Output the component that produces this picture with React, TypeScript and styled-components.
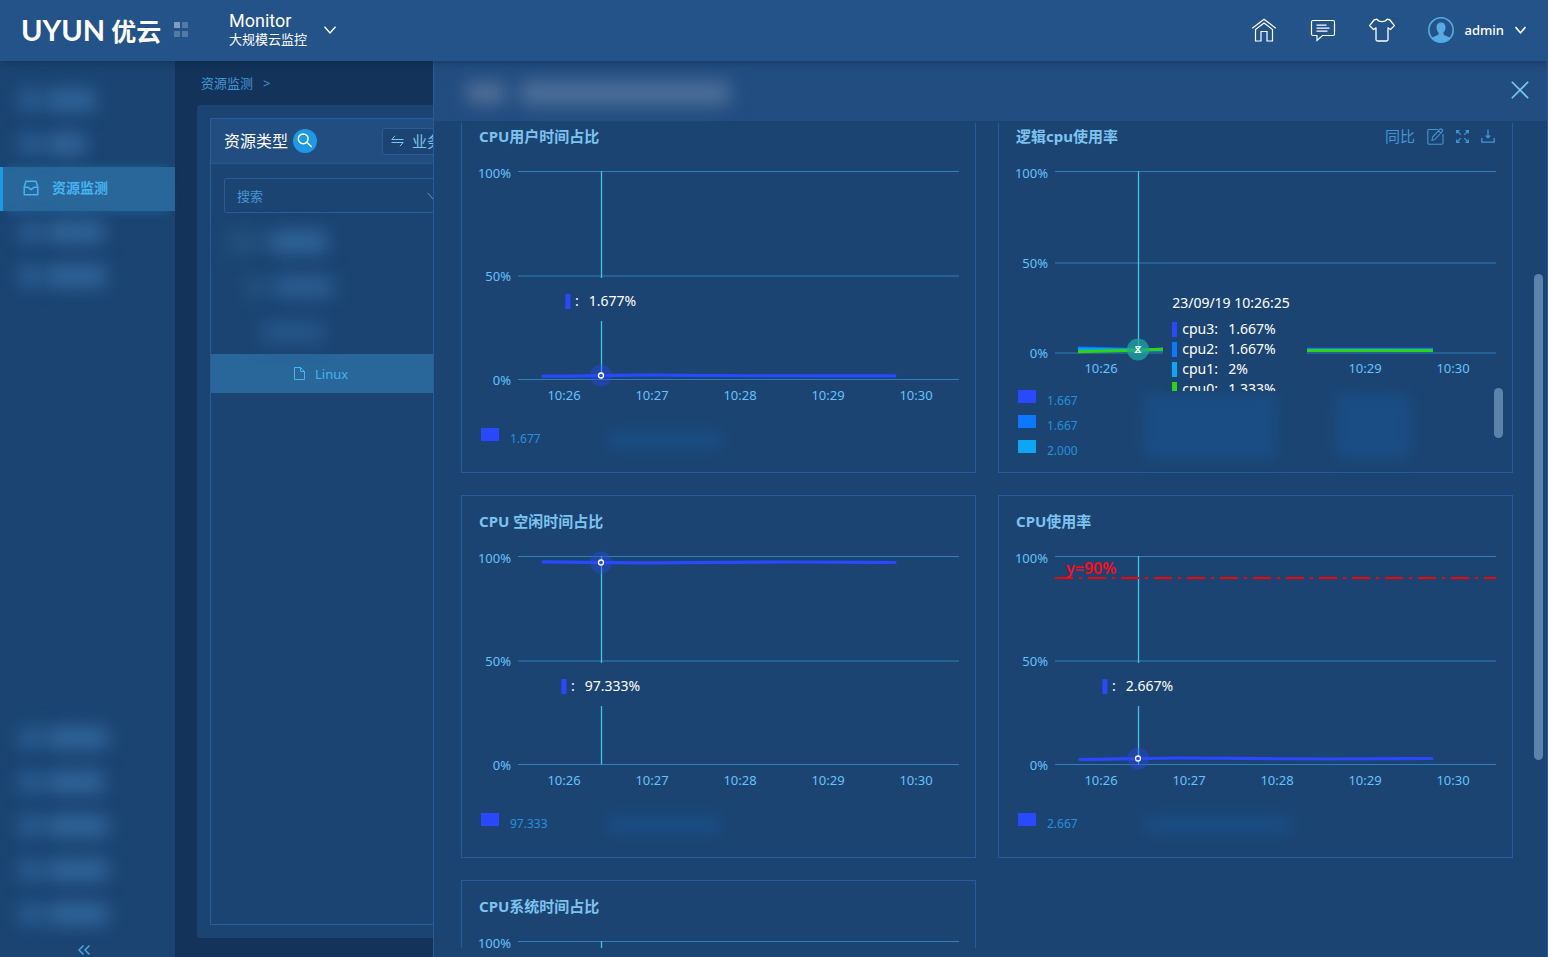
import React from 'react';
import styled, { createGlobalStyle, css } from 'styled-components';

const color = {
  header: '#235388',
  page: '#13335b',
  panel: '#1b4472',
  panelHead: '#224d80',
  border: '#285d9b',
  active: '#296699',
  accent: '#1f98e5',
  activeText: '#45b4f0',
  link: '#4497d2',
  title: '#7ec3ef',
  axis: '#66c2fa',
  grid: '#2f7fb8',
  pointer: '#45c4e0',
  legend: '#2790dc',
  indigo: '#2a48ff',
  blue: '#0c78ff',
  cyan: '#0fa5f5',
  green: '#2fd50c',
  thumb: '#5c83a9',
};

const GlobalStyle = createGlobalStyle`
  * { box-sizing: border-box; }
  body {
    margin: 0;
    background: ${color.page};
    font-family: "Noto Sans", "Noto Sans CJK SC", sans-serif;
    font-size: 13px;
    line-height: 20px;
  }
  button { font: inherit; color: inherit; background: none; border: 0; padding: 0; cursor: pointer; }
  a { text-decoration: none; color: inherit; }
  ul { list-style: none; margin: 0; padding: 0; }
  svg { display: block; flex: none; }
`;

const Page = styled.div`
  display: flex;
  flex-direction: column;
  height: 100vh;
  overflow: hidden;
`;

/* ---------- top bar ---------- */

const TopBar = styled.header`
  display: flex;
  align-items: center;
  flex: none;
  height: 61px;
  padding: 0 22px 2px 21px;
  background: ${color.header};
  color: #fff;
  position: relative;
  z-index: 3;
  box-shadow: 0 1px 8px rgba(8, 28, 56, 0.45);
`;

const Logo = styled.a`
  display: flex;
  align-items: center;
  gap: 6px;
  width: 140px;
  white-space: nowrap;
  font-family: Lato, sans-serif;
  font-size: 29px;
  line-height: 40px;
  font-weight: 700;
`;

const LogoCjk = styled.span`
  font-family: "Noto Sans CJK SC", sans-serif;
  font-size: 25px;
`;

const AppsButton = styled.button`
  margin-left: 13px;
`;

const ProductButton = styled.button`
  display: flex;
  align-items: center;
  gap: 17px;
  margin-left: 41px;
  text-align: left;
`;

const ProductName = styled.span`
  display: flex;
  flex-direction: column;
  line-height: 19px;
`;

const ProductTitle = styled.span`
  font-family: Roboto, sans-serif;
  font-size: 18px;
`;

const TopActions = styled.nav`
  display: flex;
  align-items: center;
  gap: 33px;
  margin-left: auto;
`;

const UserButton = styled.button`
  display: flex;
  align-items: center;
  gap: 11px;
  font-family: "Noto Sans", sans-serif;
  font-weight: 500;
`;

/* ---------- body and side bar ---------- */

const Body = styled.div`
  display: flex;
  flex: 1;
  min-height: 0;
  position: relative;
`;

const SideBar = styled.nav`
  display: flex;
  flex-direction: column;
  flex: none;
  width: 175px;
  padding-top: 18px;
  background: ${color.panel};
`;

const sideRow = css`
  display: flex;
  align-items: center;
  height: 44px;
  padding: 0 0 2px 20px;
`;

const HiddenItem = styled.li`
  ${sideRow}
  gap: 4px;
`;

const ActiveItem = styled.li`
  ${sideRow}
  border-left: 3px solid ${color.accent};
  background: ${color.active};
  color: ${color.activeText};
  font-size: 14px;
  font-weight: 700;
  box-shadow: 0 -8px 8px -8px #1b6294, 0 8px 8px -6px #1b5c90;
`;

const ActiveLink = styled.a`
  display: flex;
  align-items: center;
  gap: 13px;
`;

const BottomList = styled.ul`
  margin-top: auto;
`;

const CollapseButton = styled.button`
  display: flex;
  justify-content: center;
  align-items: center;
  height: 20px;
  padding: 6px 8px 0 0;
`;

const Smudge = styled.span<{ $w: number; $h?: number; $c?: string; $blur?: number }>`
  display: block;
  flex: none;
  width: ${p => p.$w}px;
  height: ${p => p.$h ?? 22}px;
  border-radius: 6px;
  background: ${p => p.$c ?? '#31659a'};
  filter: blur(${p => p.$blur ?? 9}px);
`;

/* ---------- resource tree ---------- */

const Main = styled.main`
  display: flex;
  flex-direction: column;
  flex: 1;
  min-width: 0;
  padding: 0 22px 19px;
`;

const Breadcrumb = styled.nav`
  display: flex;
  align-items: center;
  gap: 10px;
  height: 44px;
  padding-left: 4px;
  color: ${color.link};
`;

const Panel = styled.section`
  display: flex;
  flex: 1;
  padding: 13px;
  border-radius: 3px;
  background: ${color.panel};
`;

const TreeCard = styled.div`
  width: 250px;
  border: 1px solid ${color.border};
`;

const TreeHead = styled.div`
  display: flex;
  align-items: center;
  height: 45px;
  padding: 0 13px;
  border-bottom: 1px solid #25558b;
  background: ${color.panelHead};
`;

const TreeTitle = styled.h2`
  margin: 0;
  color: #fff;
  font-size: 16px;
  font-weight: 400;
`;

const RoundButton = styled.button`
  display: flex;
  align-items: center;
  justify-content: center;
  width: 24px;
  height: 24px;
  margin-left: 5px;
  border-radius: 50%;
  background: ${color.accent};
`;

const SwitchButton = styled.button`
  display: flex;
  align-items: center;
  gap: 8px;
  width: 64px;
  height: 27px;
  margin-left: auto;
  padding-left: 8px;
  border: 1px solid ${color.border};
  border-radius: 2px;
  background: ${color.panel};
  color: ${color.title};
  font-size: 15px;
  white-space: nowrap;
`;

const SearchBox = styled.label`
  display: flex;
  align-items: center;
  height: 35px;
  margin: 14px 13px 6px;
  padding: 0 6px 0 12px;
  border: 1px solid ${color.border};
  border-radius: 2px;
`;

const SearchInput = styled.input`
  flex: 1;
  min-width: 0;
  padding: 0;
  border: 0;
  outline: 0;
  background: none;
  color: ${color.title};
  font: inherit;
  &::placeholder { color: ${color.link}; opacity: 1; }
`;

const TreeHidden = styled.li<{ $indent: number }>`
  display: flex;
  align-items: center;
  gap: 6px;
  height: 45px;
  padding-left: ${p => p.$indent}px;
`;

const TreeLeaf = styled.li`
  height: 39px;
  background: ${color.active};
  color: ${color.activeText};
`;

const LeafLink = styled.a`
  display: flex;
  align-items: center;
  gap: 10px;
  height: 100%;
  padding-left: 83px;
`;

/* ---------- drawer ---------- */

const Drawer = styled.aside`
  display: flex;
  flex-direction: column;
  position: absolute;
  inset: 0 0 0 433px;
  z-index: 2;
  padding-bottom: 9px;
  border: solid ${color.border};
  border-width: 0 1px;
  background: ${color.panel};
`;

const DrawerHead = styled.div`
  display: flex;
  align-items: center;
  flex: none;
  gap: 14px;
  height: 60px;
  margin-bottom: 2px;
  padding: 4px 18px 0 32px;
  background: ${color.panelHead};
`;

const CloseButton = styled.button`
  margin: 0 0 7px auto;
`;

const DrawerBody = styled.div`
  flex: 1;
  min-height: 0;
  overflow: hidden;
`;

const CardGrid = styled.div`
  display: grid;
  grid-template-columns: 1fr 1fr;
  gap: 22px;
  margin-top: -13px;
  padding: 0 34px 0 27px;
`;

const Thumb = styled.span<{ $top: number; $h: number; $right: number }>`
  position: absolute;
  top: ${p => p.$top}px;
  right: ${p => p.$right}px;
  width: 9px;
  height: ${p => p.$h}px;
  border-radius: 5px;
  background: ${color.thumb};
`;

/* ---------- metric card ---------- */

const Card = styled.article`
  min-height: 363px;
  border: 1px solid ${color.border};
`;

const CardHead = styled.div`
  display: flex;
  align-items: center;
  justify-content: space-between;
  height: 40px;
  padding: 10px 17px 0;
`;

const CardTitle = styled.h3`
  margin: 0;
  color: ${color.title};
  font-size: 15px;
  font-weight: 700;
`;

const CardTools = styled.div`
  display: flex;
  align-items: center;
  gap: 12px;
  color: ${color.link};
  font-size: 15px;
`;

const ChartBox = styled.div`
  position: relative;
`;

const ChartSvg = styled.svg`
  width: 100%;
  height: auto;
  text { font-size: 13px; fill: ${color.axis}; }
  .mark { font-size: 16px; font-weight: 600; fill: #ff0a18; }
`;

const Tip = styled.div`
  position: absolute;
  top: 127px;
  left: 27%;
  height: 43px;
  padding: 13px 10px 10px;
  transform: translateX(-50%);
  background: ${color.panel};
  color: #fff;
`;

const WideTip = styled.div`
  position: absolute;
  top: 133px;
  left: 32%;
  width: 144px;
  height: 107px;
  padding: 9px;
  overflow: hidden;
  z-index: 1;
  background: ${color.panel};
  color: #fff;
`;

const TipDate = styled.div`
  margin-bottom: 6px;
  font-size: 14px;
  white-space: nowrap;
`;

const TipRow = styled.div`
  display: flex;
  align-items: center;
  height: 20px;
  font-size: 14px;
  white-space: nowrap;
`;

const TipMark = styled.span<{ $c: string }>`
  width: 5px;
  height: 15px;
  margin-right: 5px;
  background: ${p => p.$c};
`;

const TipValue = styled.span`
  margin-left: 10px;
`;

const TipName = styled.span`
  width: 36px;
`;

const Legend = styled.ul`
  position: relative;
  padding: 7px 0 0 19px;
`;

const LegendRow = styled.li`
  display: flex;
  gap: 11px;
  height: 25px;
  color: ${color.legend};
  font-size: 12px;
  line-height: 22px;
`;

const Swatch = styled.span<{ $c: string }>`
  width: 18px;
  height: 13px;
  background: ${p => p.$c};
`;

const LegendNames = styled.div`
  display: flex;
  position: absolute;
  top: 10px;
  left: 144px;
  gap: 58px;
`;

/* ---------- icons ---------- */

const ChevronDown = ({ w = 12, sw = 1.3, c = '#fff' }) => (
  <svg width={w} height="8" viewBox="0 0 12 8" fill="none" stroke={c} strokeWidth={sw}>
    <path d="M0.5 0.8 6 7 11.5 0.8" />
  </svg>
);

const AppsIcon = () => (
  <svg width="14" height="15" viewBox="0 0 14 15" fill="#5579a5">
    <rect width="6" height="6" rx="0.5" fill="#7f9cc0" />
    <rect x="8" width="6" height="6" rx="0.5" />
    <rect y="9" width="6" height="6" rx="0.5" />
    <rect x="8" y="9" width="6" height="6" rx="0.5" />
  </svg>
);

const HomeIcon = () => (
  <svg width="26" height="26" viewBox="0 0 26 26" fill="none" stroke="#fff" strokeWidth="1.2">
    <path d="M1.3 11.2 13 2.2l11.7 9" />
    <path d="M4.5 12.5 13 6l8.500 6.500V24H16v-9.500h-6V24H4.500z" />
  </svg>
);

const MessageIcon = () => (
  <svg width="26" height="26" viewBox="0 0 26 26" fill="none" stroke="#fff" strokeWidth="1.2">
    <path d="M3 3.500h20a1.500 1.500 0 0 1 1.500 1.500v12a1.500 1.500 0 0 1-1.500 1.500H12.500L7 23.500v-5H3A1.500 1.500 0 0 1 1.500 17V5A1.500 1.500 0 0 1 3 3.500z" />
    <path d="M6.500 8.200h10M6.500 11.200h13M6.500 14.200h11" />
  </svg>
);

const ShirtIcon = () => (
  <svg width="26" height="26" viewBox="0 0 26 26" fill="none" stroke="#fff" strokeWidth="1.3" strokeLinejoin="round">
    <path d="M8 2.200C9.500 5.400 16.500 5.400 18 2.200l3 .8 4.400 5.600-3.900 3.900-2.500-1.600v11.600a1.500 1.500 0 0 1-1.500 1.500h-9A1.500 1.500 0 0 1 7 22.500V10.900l-2.500 1.600L.6 8.600 5 3z" />
  </svg>
);

const AvatarIcon = () => (
  <svg width="26" height="26" viewBox="0 0 26 26">
    <circle cx="13" cy="13" r="12.200" fill="none" stroke="#56abe4" strokeWidth="1.600" />
    <path d="M13 5.500c3 0 4.600 2 4.500 5-.1 2.200-.9 3.900-2 4.800v2.200c1 1.400 4.500 1.500 6.500 3.200A12 12 0 0 1 13 25a12 12 0 0 1-9-4.300c2-1.700 5.500-1.800 6.500-3.200v-2.200c-1.100-.9-1.900-2.600-2-4.800-.1-3 1.500-5 4.500-5z" fill="#56abe4" />
  </svg>
);

const InboxIcon = () => (
  <svg width="16" height="16" viewBox="0 0 16 16" fill="none" stroke="currentColor" strokeWidth="1.500" strokeLinejoin="round">
    <path d="M1.200 7 3 1.200h10L14.800 7v7.800H1.200z" />
    <path d="M1.200 7.300H5l3 2.400 3-2.400h3.800" />
  </svg>
);

const SearchIcon = () => (
  <svg width="16" height="16" viewBox="0 0 16 16" fill="none" stroke="#fff" strokeWidth="1.500">
    <circle cx="6.200" cy="5.800" r="4.900" />
    <path d="m9.800 9.300 4.900 4.600" />
  </svg>
);

const SwapIcon = () => (
  <svg width="13" height="12" viewBox="0 0 13 12" fill="none" stroke="currentColor" strokeWidth="1">
    <path d="M4 .8.8 4.500H12.500M9 11.200l3.200-3.700H.5" />
  </svg>
);

const FileIcon = () => (
  <svg width="11" height="13" viewBox="0 0 11 13" fill="none" stroke="currentColor" strokeWidth="1">
    <path d="M.5.5h6l4 4v8H.500zM6.500.5v4h4" />
  </svg>
);

const CollapseIcon = () => (
  <svg width="12" height="10" viewBox="0 0 12 10" fill="none" stroke="#4da3dc" strokeWidth="1.500">
    <path d="M5.500.5 1 5l4.500 4.500M11.500.5 7 5l4.500 4.500" />
  </svg>
);

const CloseIcon = () => (
  <svg width="18" height="18" viewBox="0 0 18 18" fill="none" stroke="#7cc8f5" strokeWidth="1.600">
    <path d="m.8.8 16.400 16.400M17.200.8.8 17.200" />
  </svg>
);

const EditIcon = () => (
  <svg width="17" height="17" viewBox="0 0 17 17" fill="none" stroke="currentColor" strokeWidth="1.100">
    <path d="M11 1.500H2A1.200 1.200 0 0 0 .8 2.700V15A1.200 1.200 0 0 0 2 16.200h12.800A1.200 1.200 0 0 0 16 15V6" />
    <path d="M5 12.500 5.600 9 13 1.200c1-.9 3.300 1 2.300 2.300L8 11.400zM11.600 2.800l2.400 2.300" />
  </svg>
);

const ShrinkIcon = () => (
  <svg width="13" height="13" viewBox="0 0 13 13" fill="none" stroke="currentColor" strokeWidth="1.100">
    <path d="m1 1 3.800 3.800M.6 3.600v-3h3M12 1 8.200 4.800M9.400.6h3v3M1 12l3.800-3.800M.6 9.400v3h3M12 12 8.200 8.200M12.400 9.400v3h-3" />
  </svg>
);

const DownloadIcon = () => (
  <svg width="14" height="14" viewBox="0 0 14 14" fill="none" stroke="currentColor" strokeWidth="1.300">
    <path d="M.8 9v4.200h12.400V9M7 .5v8M4.800 6.500 7 8.800l2.200-2.300" />
  </svg>
);

/* ---------- charts ---------- */

const TIMES = ['10:26', '10:27', '10:28', '10:29', '10:30'];
const LEFT = 56;
const RIGHT = 497;
const POINTER_X = 139;

interface ChartProps {
  height: number;
  middle: number;
  bottom: number;
  label: string;
  children?: React.ReactNode;
}

function Chart({ height, middle, bottom, label, children }: ChartProps) {
  return (
    <ChartSvg viewBox={`0 0 513 ${height}`} role="img" aria-label={label}>
      <g stroke={color.grid}>
        <line x1={LEFT} x2={RIGHT} y1="20.5" y2="20.5" />
        <line x1={LEFT} x2={RIGHT} y1={middle} y2={middle} />
        <line x1={LEFT} x2={RIGHT} y1={bottom} y2={bottom} />
      </g>
      <g textAnchor="end">
        <text x="49" y="27">100%</text>
        <text x="49" y={middle + 5}>50%</text>
        <text x="49" y={bottom + 5}>0%</text>
      </g>
      <g textAnchor="middle">
        {TIMES.map((t, i) => (
          <text key={t} x={102 + i * 88} y={bottom + 20}>{t}</text>
        ))}
      </g>
      <line x1={POINTER_X + 0.5} x2={POINTER_X + 0.5} y1="20" y2={bottom} stroke={color.pointer} strokeWidth="1.3" />
      {children}
    </ChartSvg>
  );
}

function Series({ d, y }: { d: string; y: number }) {
  return (
    <g>
      <circle cx={POINTER_X} cy={y} r="11" fill={color.indigo} opacity="0.35" />
      <path d={d} fill="none" stroke={color.indigo} strokeWidth="3.2" strokeLinecap="round" />
      <circle cx={POINTER_X} cy={y} r="2.500" fill={color.indigo} stroke="#fff" strokeWidth="1.300" />
    </g>
  );
}

interface MetricProps {
  title: string;
  value: string;
  tip: string;
  path: string;
  y: number;
  smudge: number;
  threshold?: boolean;
}

function MetricCard({ title, value, tip, path, y, smudge, threshold }: MetricProps) {
  return (
    <Card>
      <CardHead><CardTitle>{title}</CardTitle></CardHead>
      <ChartBox>
        <Chart height={270} middle={125} bottom={228.5} label={title}>
          {threshold && (
            <>
              <line x1={LEFT} x2={RIGHT} y1="42" y2="42" stroke="#f00" strokeWidth="2.200" strokeDasharray="18 6 3 6" />
              <text className="mark" x="67" y="38">y=90%</text>
            </>
          )}
          <Series d={path} y={y} />
        </Chart>
        <Tip>
          <TipRow>
            <TipMark $c={color.indigo} />:<TipValue>{tip}</TipValue>
          </TipRow>
        </Tip>
      </ChartBox>
      <Legend>
        <LegendRow><Swatch $c={color.indigo} />{value}</LegendRow>
        <LegendNames><Smudge $w={smudge} $h={18} $c="#1a4d83" $blur={7} /></LegendNames>
      </Legend>
    </Card>
  );
}

const CPUS = [
  { name: 'cpu3', tip: '1.667%', c: color.indigo },
  { name: 'cpu2', tip: '1.667%', c: color.blue },
  { name: 'cpu1', tip: '2%', c: color.cyan },
  { name: 'cpu0', tip: '1.333%', c: color.green },
];

const CPU_LEGEND = [
  { value: '1.667', c: color.indigo },
  { value: '1.667', c: color.blue },
  { value: '2.000', c: color.cyan },
];

function LogicalCpuCard() {
  return (
    <Card>
      <CardHead>
        <CardTitle>逻辑cpu使用率</CardTitle>
        <CardTools>
          <button>同比</button>
          <button aria-label="编辑"><EditIcon /></button>
          <button aria-label="缩放"><ShrinkIcon /></button>
          <button aria-label="下载"><DownloadIcon /></button>
        </CardTools>
      </CardHead>
      <ChartBox>
        <Chart height={232} middle={112} bottom={202} label="逻辑cpu使用率">
          <g fill="none" strokeWidth="3">
            <path d="M79 199.500 139 198.500 250 198 434 198" stroke={color.indigo} />
            <path d="M79 197 139 198.500 250 199 434 198.500" stroke={color.blue} />
            <path d="M79 198.800 139 199 250 199 434 199.500" stroke={color.cyan} />
            <path d="M79 200.800 139 199.200 164 198 308 199.500 434 199.500" stroke={color.green} />
          </g>
          <circle cx={POINTER_X} cy="198.500" r="11" fill="#1fa5a2" opacity="0.75" />
          <path d="M136.500 195.500h5l-5 6h5l-5-6" fill="none" stroke="#fff" strokeWidth="1.200" />
        </Chart>
        <WideTip>
          <TipDate>23/09/19 10:26:25</TipDate>
          {CPUS.map(c => (
            <TipRow key={c.name}>
              <TipMark $c={c.c} />
              <TipName>{c.name}:</TipName>
              <TipValue>{c.tip}</TipValue>
            </TipRow>
          ))}
        </WideTip>
      </ChartBox>
      <Legend>
        {CPU_LEGEND.map((l, i) => (
          <LegendRow key={i}><Swatch $c={l.c} />{l.value}</LegendRow>
        ))}
        <LegendNames>
          <Smudge $w={134} $h={66} $c="#1a4d83" $blur={7} />
          <Smudge $w={76} $h={66} $c="#1a4d83" $blur={7} />
        </LegendNames>
        <Thumb $top={5} $h={50} $right={9} />
      </Legend>
    </Card>
  );
}

const TOP_HIDDEN = [50, 40];
const MID_HIDDEN = [58, 60];
const BOTTOM_HIDDEN = [62, 58, 62, 62, 62];

const hiddenItem = (w: number, i: number) => (
  <HiddenItem key={i}>
    <Smudge $w={22} $c="#2c6096" />
    <Smudge $w={w} />
  </HiddenItem>
);

export default function App() {
  return (
    <Page>
      <GlobalStyle />
      <TopBar>
        <Logo href="#">UYUN<LogoCjk>优云</LogoCjk></Logo>
        <AppsButton aria-label="应用"><AppsIcon /></AppsButton>
        <ProductButton>
          <ProductName>
            <ProductTitle>Monitor</ProductTitle>
            <span>大规模云监控</span>
          </ProductName>
          <ChevronDown />
        </ProductButton>
        <TopActions>
          <a href="#" aria-label="首页"><HomeIcon /></a>
          <a href="#" aria-label="消息"><MessageIcon /></a>
          <a href="#" aria-label="主题"><ShirtIcon /></a>
          <UserButton>
            <AvatarIcon />admin<ChevronDown w={11} sw={1.7} />
          </UserButton>
        </TopActions>
      </TopBar>
      <Body>
        <SideBar>
          <ul>
            {TOP_HIDDEN.map(hiddenItem)}
            <ActiveItem>
              <ActiveLink href="#"><InboxIcon />资源监测</ActiveLink>
            </ActiveItem>
            {MID_HIDDEN.map(hiddenItem)}
          </ul>
          <BottomList>{BOTTOM_HIDDEN.map(hiddenItem)}</BottomList>
          <CollapseButton aria-label="收起"><CollapseIcon /></CollapseButton>
        </SideBar>
        <Main>
          <Breadcrumb><a href="#">资源监测</a><span>&gt;</span></Breadcrumb>
          <Panel>
            <TreeCard>
              <TreeHead>
                <TreeTitle>资源类型</TreeTitle>
                <RoundButton aria-label="搜索资源"><SearchIcon /></RoundButton>
                <SwitchButton><SwapIcon />业务</SwitchButton>
              </TreeHead>
              <SearchBox>
                <SearchInput placeholder="搜索" aria-label="搜索" />
                <ChevronDown sw={1} c="#6b93b8" />
              </SearchBox>
              <ul>
                <TreeHidden $indent={16}>
                  <Smudge $w={36} $c="#24527f" />
                  <Smudge $w={58} />
                </TreeHidden>
                <TreeHidden $indent={34}>
                  <Smudge $w={22} $c="#24527f" />
                  <Smudge $w={60} $c="#2c5d92" />
                </TreeHidden>
                <TreeHidden $indent={50}>
                  <Smudge $w={64} $c="#26568a" />
                </TreeHidden>
                <TreeLeaf>
                  <LeafLink href="#"><FileIcon />Linux</LeafLink>
                </TreeLeaf>
              </ul>
            </TreeCard>
          </Panel>
        </Main>
        <Drawer>
          <DrawerHead>
            <Smudge $w={40} $h={20} $c="#567299" />
            <Smudge $w={210} $h={24} $c="#4f6f98" />
            <CloseButton aria-label="关闭"><CloseIcon /></CloseButton>
          </DrawerHead>
          <DrawerBody>
            <CardGrid>
              <MetricCard title="CPU用户时间占比" value="1.677" tip="1.677%" y={224.5} smudge={118}
                path="M81 225.200C130 225 160 224 190 224.200S300 225 350 224.800H433" />
              <LogicalCpuCard />
              <MetricCard title="CPU 空闲时间占比" value="97.333" tip="97.333%" y={26.5} smudge={116}
                path="M81 25.800C130 26 160 27 190 26.800S270 26 330 26 400 26.500 433 26.500" />
              <MetricCard title="CPU使用率" value="2.667" tip="2.667%" y={222.5} smudge={150} threshold
                path="M81 223.500C130 223.200 150 222 180 222S280 223 330 223 400 222.500 433 222.500" />
              <MetricCard title="CPU系统时间占比" value="1.000" tip="1.000%" y={225} smudge={118}
                path="M81 225H433" />
            </CardGrid>
          </DrawerBody>
          <Thumb $top={213} $h={486} $right={4} />
        </Drawer>
      </Body>
    </Page>
  );
}
